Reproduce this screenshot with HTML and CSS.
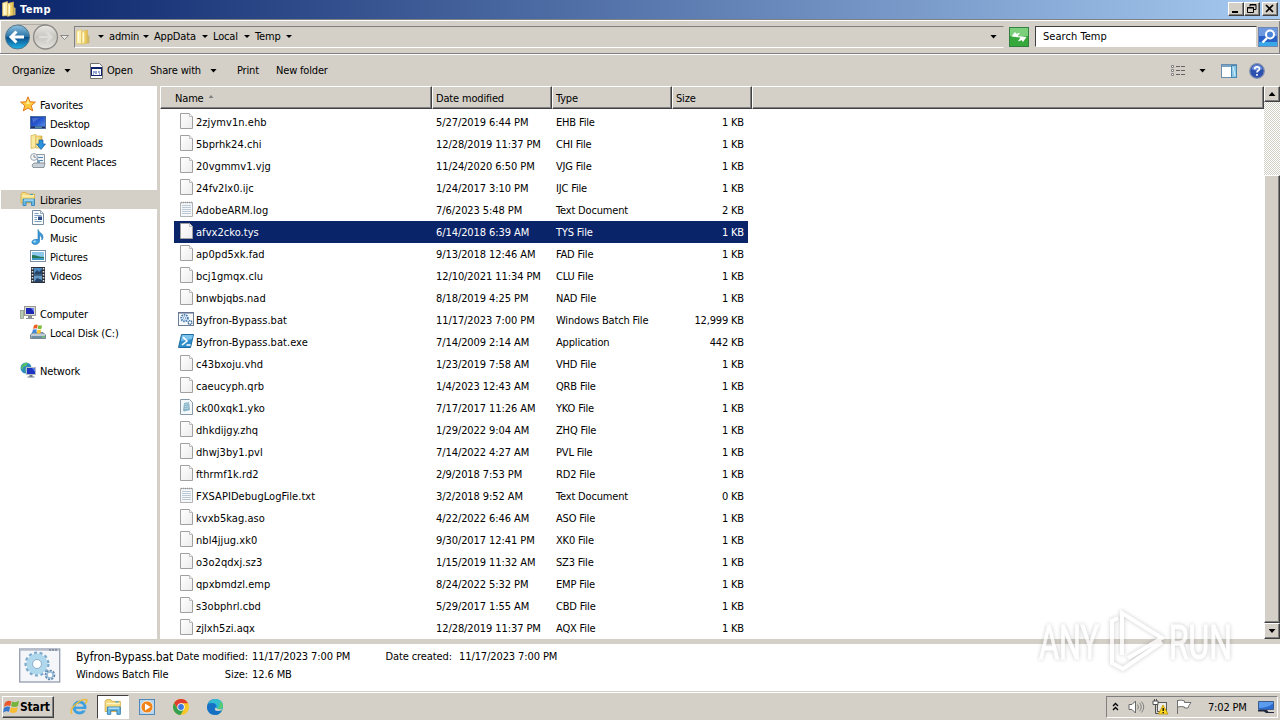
FILE: index.html
```html
<!DOCTYPE html>
<html lang="en">
<head>
  <meta charset="UTF-8" />
  <meta name="viewport" content="width=device-width, initial-scale=1.0" />
  <title>Temp</title>
  <link rel="stylesheet" href="styles.css">
</head>
<body>
  <!-- shared icons -->
  <svg width="0" height="0" class="defs">
    <defs>
      <linearGradient id="gFolder" x1="0" x2="1"><stop offset="0" stop-color="#fff3b0"/><stop offset="1" stop-color="#e0b840"/></linearGradient>
      <linearGradient id="gBlue" x1="0" x2="0" y1="0" y2="1"><stop offset="0" stop-color="#8fc3e0"/><stop offset=".48" stop-color="#2a74a8"/><stop offset=".5" stop-color="#0a4a86"/><stop offset="1" stop-color="#22b4e8"/></linearGradient>
      <linearGradient id="gGrey" x1="0" x2="0" y1="0" y2="1"><stop offset="0" stop-color="#eceae6"/><stop offset=".5" stop-color="#c8c5bf"/><stop offset="1" stop-color="#e6e4df"/></linearGradient>
      <linearGradient id="gPage" x1="0" x2="1" y1="0" y2="1"><stop offset="0" stop-color="#ffffff"/><stop offset="1" stop-color="#ececec"/></linearGradient>
      <linearGradient id="gScreen" x1="0" x2="1" y1="0" y2="1"><stop offset="0" stop-color="#1838a8"/><stop offset=".5" stop-color="#2858d0"/><stop offset="1" stop-color="#6a9cf0"/></linearGradient>
      <linearGradient id="gEdge" x1="0" x2="1" y1="0" y2="1"><stop offset="0" stop-color="#1468b8"/><stop offset=".5" stop-color="#1c98dc"/><stop offset="1" stop-color="#48c870"/></linearGradient>
    </defs>
    <symbol id="folder" viewBox="0 0 16 16">
      <path d="M1.500 2l5-1.500v14l-5 .5z" fill="#fdf0b0" stroke="#e0c060" stroke-width=".6"/>
      <path d="M6.500 2.500l6-1.500v13l-6 1.500z" fill="url(#gFolder)" stroke="#d8b450" stroke-width=".6"/>
      <path d="M12.500 6l2 1v7l-2 .5z" fill="#c9b56a"/>
      <path d="M3.500 3v10M8.500 4v9" stroke="#fffbe0" stroke-width="1"/>
    </symbol>
    <symbol id="star" viewBox="0 0 16 16">
      <path d="M8 .8l2 5 5.400.3-4.100 3.500 1.500 5.300L8 12l-4.700 2.900L4.700 9.600.6 6.100 6 5.800z" fill="#fcc83c" stroke="#dc6c14" stroke-width=".9"/>
      <path d="M8 3l1 3.700 3 .3-4 1-3-1 2-.5z" fill="#fff3a0"/>
    </symbol>
    <symbol id="desktop" viewBox="0 0 16 16">
      <rect x=".5" y="1.500" width="15" height="12" fill="url(#gScreen)" stroke="#4c6c9c"/>
      <path d="M2 3h7l-6 5z" fill="#7090e0" opacity=".5"/>
      <rect x="1" y="11.500" width="14" height="1.500" fill="#282c58"/><rect x="5" y="11.500" width="7" height="1.500" fill="#508ca0"/>
    </symbol>
    <symbol id="tray-desktop" viewBox="0 0 16 16">
      <path d="M.5 2.500h15v8H.5z" fill="#2c6cd0" stroke="#3c5c90"/>
      <path d="M1 3h14v1.500Q9 9 1 9z" fill="#5c9cec"/>
      <path d="M0 11h9l1.500 2H16v1H8l-2-1.500H0z" fill="#20283c"/>
    </symbol>
    <symbol id="downloads" viewBox="0 0 16 16">
      <path d="M1 1.500l5-1v13l-5 1z" fill="#fbe9a0" stroke="#d0ac48" stroke-width=".7"/>
      <path d="M6 2h6v12H6z" fill="url(#gFolder)" stroke="#d0ac48" stroke-width=".7"/>
      <path d="M9 6h4v4h2.500L11 15.500 6.500 10H9z" fill="#2c90dc" stroke="#1460a4" stroke-width=".7"/>
    </symbol>
    <symbol id="recent" viewBox="0 0 16 16">
      <path d="M5.500 1.500h9v9h-7v-5h-2z" fill="#eef2f6" stroke="#8c98a4"/>
      <path d="M8 4.500h5M9 7.500h4" stroke="#4c88b4"/><path d="M7 7h3v3H7z" fill="#7ca4c0"/>
      <path d="M2 12l2-2h11l-1 4.500H3z" fill="#c8d0d8" stroke="#78848e" stroke-width=".8"/>
      <circle cx="4" cy="4" r="3.400" fill="#f4f6f8" stroke="#909aa4" stroke-width=".9"/>
      <path d="M4 2v2.200h2" stroke="#607080" fill="none" stroke-width=".8"/>
    </symbol>
    <symbol id="libraries" viewBox="0 0 16 16">
      <path d="M1 3l1-1.500h4l1 1.500h7.500v9H1z" fill="#f6dc80" stroke="#d0ac48" stroke-width=".8"/>
      <path d="M2 5h12" stroke="#fff6c8"/><path d="M10 3.500h3" stroke="#40a0c8"/>
      <path d="M3 8h11.500v6.500h-3V11H6v3.500H3z" fill="#68b8e4" stroke="#2c7cb0" stroke-width=".8"/>
      <path d="M4 9h9.500" stroke="#c8ecfc"/>
    </symbol>
    <symbol id="documents" viewBox="0 0 16 16">
      <path d="M2.500.5h8l3 3v11h-11z" fill="#fafcfe" stroke="#788ca0"/>
      <path d="M10.500.5v3h3" fill="#dce6ee" stroke="#788ca0" stroke-width=".7"/>
      <path d="M4.500 3.500h4M4.500 5.500h7M4.500 7.500h2.500M4.500 9.500h2.500M4.500 11.500h7" stroke="#6c94bc" stroke-width=".9"/>
      <rect x="8" y="6.500" width="4" height="3.500" fill="#284c88"/>
    </symbol>
    <symbol id="music" viewBox="0 0 16 16">
      <path d="M8 .5c.5 3 5 3.500 5 7.500 0 1.500-.6 2.500-1.200 3 .4-3-.8-4-2.300-4.500V12c0 2-2 3.500-4.500 3.500S1.500 14 2 12.500 5 10 8 10.500z" fill="#3c9cdc" stroke="#1c70b0" stroke-width=".6"/>
      <ellipse cx="4.600" cy="12.500" rx="1.500" ry="1" fill="#a8dcf8"/>
    </symbol>
    <symbol id="pictures" viewBox="0 0 16 16">
      <rect x=".5" y="2.500" width="15" height="11" fill="#fff" stroke="#7890a8"/>
      <rect x="2" y="4" width="12" height="8" fill="#8cc8ec"/>
      <path d="M2 7c4 0 7 2 12 2v3H2z" fill="#247858"/><path d="M2 10l12 0v2H2z" fill="#3c98c0"/>
    </symbol>
    <symbol id="videos" viewBox="0 0 16 16">
      <rect x="1" y="0" width="14" height="16" fill="#2c3038"/>
      <rect x="4" y="1" width="8" height="6.500" fill="#4c8cc4"/><rect x="4" y="8.500" width="8" height="6.500" fill="#6098c8"/>
      <path d="M4 7l3-4 2 2 3-3v5zM4 15l3-4 5 2v2z" fill="#264468"/>
      <path d="M2.500 1v14M13.500 1v14" stroke="#e4e8ec" stroke-width="1.500" stroke-dasharray="1.500 1.500"/>
    </symbol>
    <symbol id="computer" viewBox="0 0 16 16">
      <rect x="4.500" y="1.500" width="11" height="9" fill="#dcdcd4" stroke="#989890"/>
      <rect x="6" y="3" width="8" height="6" fill="#1c28b4"/><path d="M11 3h3v4z" fill="#6c84f0"/>
      <path d="M8 11h4v2h2v1H6v-1h2z" fill="#8c9098"/>
      <rect x=".5" y="5.500" width="3" height="8" fill="#b8ccb0" stroke="#849080" stroke-width=".7"/>
    </symbol>
    <symbol id="disk" viewBox="0 0 16 16">
      <path d="M.5 11l2-2.500h10.500l2.500 2.500v3.500H.5z" fill="#98a8b4" stroke="#607484" stroke-width=".8"/>
      <path d="M1 11h14" stroke="#e8f0f4"/><path d="M2 13h10" stroke="#407890"/><rect x="12.500" y="12" width="2" height="1.500" fill="#50c850"/>
      <path d="M4 1.500Q6 0 7.700 1L7 4.500Q5 4 3 5z" fill="#ec5c24"/><path d="M8.300 1.200Q10 2 12 1.200L11.400 4.700Q9 5.500 7.600 4.700z" fill="#7cbc34"/>
      <path d="M2.800 5.700Q5 4.800 6.800 5.500L6.200 9Q4 8.400 2.200 9z" fill="#3c88dc"/><path d="M7.500 5.500Q9 6.500 11.200 5.500L10.600 9Q8 10 6.900 9z" fill="#fcc42c"/>
    </symbol>
    <symbol id="network" viewBox="0 0 16 16">
      <circle cx="6" cy="6" r="5.500" fill="#2c8cc0"/>
      <path d="M2 3q3-3 6-2l-2 3-3 1v3L1 6zM5 7l4-2 1 3-4 3z" fill="#58c068"/>
      <rect x="6.500" y="5.500" width="9" height="7" fill="#1c34c0" stroke="#b8bcc4"/>
      <path d="M12 6h3v4z" fill="#5c80ec"/><path d="M9.500 13h3v1.500h2v1h-7v-1h2z" fill="#6c7c88"/>
    </symbol>
    <symbol id="file" viewBox="0 0 16 16">
      <path d="M2.500.5h9l3 3v12h-12z" fill="url(#gPage)" stroke="#a0a0a0"/>
      <path d="M11.500.5v3h3" fill="#fafafa" stroke="#b0b0b0" stroke-width=".8"/>
    </symbol>
    <symbol id="text" viewBox="0 0 16 16">
      <path d="M2.500 1.500h12v14h-12z" fill="#f6f7f8" stroke="#b0b2b4"/>
      <path d="M3 1.500h11" stroke="#989898" stroke-width="1.500" stroke-dasharray="1 1"/>
      <path d="M4 4.500h9M4 6.500h9M4 8.500h9M4 10.500h9M4 12.500h9" stroke="#bccad8"/>
    </symbol>
    <symbol id="yko" viewBox="0 0 16 16">
      <path d="M2.500.5h9l3 3v12h-12z" fill="#f4f8fa" stroke="#8898a4"/>
      <path d="M6 4l5-1 1 8-6 1.500-1-1z" fill="#88b4c8"/><path d="M6.500 5.500l4-1M6.500 7.500l4-.5M6.500 9.500l4-.5" stroke="#b8d8e4"/>
    </symbol>
    <symbol id="bat" viewBox="0 0 16 16">
      <rect x=".5" y="1.500" width="15" height="13" fill="#f6f9fc" stroke="#6c7c94"/>
      <path d="M1 2h14" stroke="#5c6c88"/>
      <circle cx="6.500" cy="7" r="3.300" fill="none" stroke="#5084b8" stroke-width="2" stroke-dasharray="1.600 .8"/>
      <circle cx="6.500" cy="7" r="1.300" fill="#fff" stroke="#5c90c0" stroke-width=".7"/>
      <circle cx="12" cy="11.500" r="1.800" fill="#fff" stroke="#44709c" stroke-width="1.500" stroke-dasharray="1.200 .5"/>
    </symbol>
    <symbol id="powershell" viewBox="0 0 16 16">
      <path d="M3.500 1.500h12l-3 13H.5z" fill="#2f8fcc" stroke="#1c6ca4"/>
      <path d="M4 2h11l-1 4-11 2z" fill="#7cc4ec"/>
      <path d="M5 4l4 4-5 4M8.500 12h4" fill="none" stroke="#fff" stroke-width="1.600"/>
    </symbol>
    <symbol id="flag" viewBox="0 0 18 18">
      <path d="M2 4.500Q5 1 8.800 3L7.700 8Q4.500 6.500 1 9z" fill="#e8582c"/><path d="M9.600 3.200Q13 5 17 2.500L15.800 8Q12 10 8.500 8z" fill="#74b43c"/>
      <path d="M1 10Q4.500 7.600 7.500 9L6.400 14Q3.500 12.500 0 15z" fill="#3878cc"/><path d="M8.300 9.200Q12 11 15.500 9L14.500 14Q11 16.500 7.200 14.300z" fill="#f8bc30"/>
    </symbol>
  </svg>

  <div class="window">
    <div class="titlebar">
      <svg class="icon"><use href="#folder"/></svg>
      <span class="title">Temp</span>
      <div class="window-buttons">
        <span class="btn"><svg width="14" height="12"><path d="M3 9h6" stroke="#000" stroke-width="2"/></svg></span>
        <span class="btn"><svg width="14" height="12"><path d="M5 3.500V1.500h6v5H9M5 2h6M2.500 4.500h6v5h-6zM2 5h7" fill="none" stroke="#000"/></svg></span>
        <span class="btn close"><svg width="14" height="12"><path d="M3 2l7 7M10 2l-7 7" stroke="#000" stroke-width="1.700"/></svg></span>
      </div>
    </div>

    <div class="navbar">
      <svg class="arrows" width="70" height="28" viewBox="0 0 70 28">
        <path d="M16 1.500h30" stroke="#b0ada7"/>
        <circle cx="16.500" cy="14" r="12" fill="url(#gBlue)" stroke="#54788c"/>
        <path d="M10 14h13M15.500 8.500L10 14l5.500 5.500" fill="none" stroke="#fff" stroke-width="3"/>
        <circle cx="44.500" cy="14" r="12" fill="url(#gGrey)" stroke="#8c8a86" stroke-width="1.300"/>
        <path d="M38 14h12M45.500 9l5 5-5 5" fill="none" stroke="#dedcd8" stroke-width="2.600"/>
        <path d="M59.500 12.500h8l-4 4z" fill="#eceae6" stroke="#8c8a86"/>
      </svg>
      <div class="address">
        <svg class="icon"><use href="#folder"/></svg>
        <i class="down first"></i>
        <span class="crumb w-admin">admin</span><i class="down"></i>
        <span class="crumb w-appdata">AppData</span><i class="down"></i>
        <span class="crumb w-local">Local</span><i class="down"></i>
        <span class="crumb w-temp">Temp</span><i class="down"></i>
        <i class="down big last"></i>
      </div>
      <svg class="refresh" width="20" height="20" viewBox="0 0 20 20">
        <rect x=".5" y=".5" width="19" height="19" fill="#36a83c" stroke="#348040"/><path d="M1 1h18v8H1z" fill="#7cd07c"/>
        <path d="M2.500 9.500L6 5l1.500 2q1.500-1.500 3.500-1-1.500 1.500-2 2.500l1.500 2z" fill="#fff"/><path d="M17.500 10L14 15l-1.500-2q-1.500 1.500-3.500 1 1.500-1.500 2-3L10 9z" fill="#fff"/>
      </svg>
      <div class="search">Search Temp</div>
      <svg class="search-btn" width="20" height="20" viewBox="0 0 20 20">
        <rect x=".5" y=".5" width="19" height="19" fill="#2860c8" stroke="#7088b0"/><path d="M1 1h18v8H1z" fill="#6c98e0"/><path d="M1 15h18v4H1z" fill="#38a8e8"/>
        <circle cx="12" cy="7.500" r="4" fill="#4884d8" stroke="#fff" stroke-width="2"/><path d="M9 11l-4.500 4.500" stroke="#fff" stroke-width="2.400"/>
      </svg>
    </div>

    <div class="toolbar">
      <span class="w-organize">Organize</span><i class="down big"></i>
      <svg class="open-icon" width="15" height="16" viewBox="0 0 15 16"><path d="M1.500.5h9l3 3v12h-12z" fill="#fff" stroke="#707070"/><rect x="2.500" y="4.500" width="10" height="8" fill="#fff" stroke="#10246c"/><path d="M2 5h11" stroke="#10246c" stroke-width="2"/><path d="M4 9h2M7 8v3M9 9h2M4 11h1M10 11h1" stroke="#2850b0"/></svg>
      <span class="w-open">Open</span>
      <span class="w-share">Share with</span><i class="down big"></i>
      <span class="w-print">Print</span>
      <span class="w-new">New folder</span>
      <div class="toolbar-right">
        <svg width="17" height="14" viewBox="0 0 17 14"><path d="M1.500 1.500h2v2h-2zM1.500 5.500h2v2h-2zM1.500 9.500h2v2h-2z" fill="#fff" stroke="#848484"/><path d="M6 2.500h4M11 2.500h4M6 6.500h4M11 6.500h4M6 10.500h4M11 10.500h4" stroke="#646464"/></svg>
        <i class="down big"></i>
        <svg class="pane" width="17" height="14" viewBox="0 0 17 14"><rect x=".5" y=".5" width="15" height="13" fill="#fff" stroke="#6c8cac"/><path d="M1 2h14" stroke="#78a4c8" stroke-width="2"/><rect x="10.500" y="1.500" width="5" height="12" fill="#8cc8e8" stroke="#4888b0"/><path d="M12 3l2 9" stroke="#d4f0fc"/></svg>
        <svg width="16" height="16" viewBox="0 0 16 16"><circle cx="8" cy="8" r="7.300" fill="#2c50b0" stroke="#8090b0" stroke-width="1.300"/><path d="M2.500 6a5.800 5.800 0 0 1 11 0q-5 3-11 0z" fill="#6c90dc"/><path d="M5.700 6.200q0-2.400 2.400-2.400t2.300 2q0 1.200-1.300 2Q8 8.500 8 9.500M8 11v1.800" fill="none" stroke="#fff" stroke-width="1.700"/></svg>
      </div>
    </div>

    <div class="main">
      <div class="sidebar">
        <div class="group">
          <div class="node"><svg class="icon"><use href="#star"/></svg>Favorites</div>
          <div class="node child"><svg class="icon"><use href="#desktop"/></svg>Desktop</div>
          <div class="node child"><svg class="icon"><use href="#downloads"/></svg>Downloads</div>
          <div class="node child"><svg class="icon"><use href="#recent"/></svg>Recent Places</div>
        </div>
        <div class="group">
          <div class="node active"><svg class="icon"><use href="#libraries"/></svg>Libraries</div>
          <div class="node child"><svg class="icon"><use href="#documents"/></svg>Documents</div>
          <div class="node child"><svg class="icon"><use href="#music"/></svg>Music</div>
          <div class="node child"><svg class="icon"><use href="#pictures"/></svg>Pictures</div>
          <div class="node child"><svg class="icon"><use href="#videos"/></svg>Videos</div>
        </div>
        <div class="group">
          <div class="node"><svg class="icon"><use href="#computer"/></svg>Computer</div>
          <div class="node child"><svg class="icon"><use href="#disk"/></svg>Local Disk (C:)</div>
        </div>
        <div class="group">
          <div class="node"><svg class="icon"><use href="#network"/></svg>Network</div>
        </div>
      </div>

      <div class="files">
        <div class="columns">
          <div class="col name">Name <i class="up"></i></div>
          <div class="col">Date modified</div>
          <div class="col">Type</div>
          <div class="col">Size</div>
          <div class="col"></div>
        </div>
        <div class="rows" id="rows"></div>
      </div>

      <div class="scrollbar">
        <span class="sb-btn"><i class="tri-up"></i></span>
        <span class="thumb"></span>
        <span class="sb-btn"><i class="tri-down"></i></span>
      </div>
    </div>

    <div class="details">
      <svg class="big-icon" width="42" height="36" viewBox="0 0 42 36">
        <rect x=".7" y="2" width="40" height="33" fill="#f4f6fa" stroke="#9ca4b4" stroke-width="1.400"/>
        <path d="M1 3h39" stroke="#b4bcc8" stroke-width="1.600"/><path d="M30 3h9" stroke="#5c6478" stroke-dasharray="2 1"/>
        <circle cx="18" cy="17" r="11" fill="none" stroke="#7ca8cc" stroke-width="3" stroke-dasharray="3 2.400"/>
        <circle cx="18" cy="17" r="7.500" fill="#fff" stroke="#b0d8ec" stroke-width="6"/>
        <circle cx="18" cy="17" r="4.500" fill="#fff" stroke="#7098bc" stroke-width=".8"/>
        <circle cx="31" cy="28" r="4" fill="#fff" stroke="#6088ac" stroke-width="2.600" stroke-dasharray="2 1"/>
        <circle cx="31" cy="28" r="3" fill="#fff" stroke="#98bcd8" stroke-width="1.600"/>
      </svg>
      <div class="detail-name">
        <div class="file-name">Byfron-Bypass.bat</div>
        <div>Windows Batch File</div>
      </div>
      <div class="props">
        <span class="label">Date modified:</span><span>11/17/2023 7:00 PM</span>
        <span class="label">Size:</span><span>12.6 MB</span>
      </div>
      <div class="props created">
        <span class="label">Date created:</span><span>11/17/2023 7:00 PM</span>
      </div>
    </div>
  </div>

  <div class="taskbar">
    <div class="start"><svg width="17" height="18"><use href="#flag"/></svg><span>Start</span></div>
    <div class="task"><svg width="18" height="18" viewBox="0 0 18 18"><circle cx="9.500" cy="9.500" r="5.500" fill="none" stroke="#3ca0e0" stroke-width="3"/><path d="M5 9.800h10" stroke="#3ca0e0" stroke-width="2.200"/><path d="M13 11h4v1.500h-4z" fill="#d4d0c8"/><path d="M2 16Q-1 12 6 6T17 2q0 2-2 4" fill="none" stroke="#ecbc3c" stroke-width="1.500"/></svg></div>
    <div class="task active"><svg width="18" height="18"><use href="#libraries"/></svg></div>
    <div class="task"><svg width="16" height="16" viewBox="0 0 16 16"><rect x=".5" y=".5" width="15" height="15" fill="#b8d4ec" stroke="#5088b8"/><circle cx="8" cy="8" r="6" fill="#f08418" stroke="#fff" stroke-width=".7"/><path d="M6 4.500l5.500 3.500L6 11.500z" fill="#fff"/></svg></div>
    <div class="task"><svg width="16" height="16" viewBox="0 0 16 16"><circle cx="8" cy="8" r="8" fill="#f8c828"/><path d="M1.100 4A8 8 0 0 1 15 4.300H8L4.800 9.800z" fill="#e03c30"/><path d="M1.100 4A8 8 0 0 0 7.500 16l3.500-6H4.600z" fill="#34a050"/><circle cx="8" cy="8" r="3.700" fill="#fff"/><circle cx="8" cy="8" r="2.900" fill="#3c78e0"/></svg></div>
    <div class="task"><svg width="16" height="16" viewBox="0 0 16 16"><circle cx="8" cy="8" r="8" fill="url(#gEdge)"/><path d="M0 8q1-4 5-4 4 0 4 3.500Q7 9 8 11q3 2 7 0-2 5-7 5-8-1-8-8z" fill="#1670c4"/><path d="M1 4.500Q4 0 8 0q8 0 8 7-1 4-6 2.500Q11 4 5 4q-3 0-4 .5z" fill="#34bcd0"/><path d="M13 2q3 2 3 5-1 4-6 2.500 3-1 3-7.500z" fill="#58cc70"/><path d="M9 8.500q1 2.500 5.500 1.500L15 11q-5 2-7 0-.5-1.500 1-2.500z" fill="#d4d0c8"/></svg></div>
    <div class="tray">
      <svg class="t-chev" width="7" height="10" viewBox="0 0 7 10"><path d="M1 4l2.500-2.500L6 4M1 8l2.500-2.500L6 8" fill="none" stroke="#000" stroke-width="1.400"/></svg>
      <svg class="t-vol" width="17" height="14" viewBox="0 0 17 14"><path d="M1 4.500h3l3.500-3.500v12L4 9.500H1z" fill="#fff" stroke="#686868"/><path d="M9.500 4.500q2 2.500 0 5M11.500 2.800q3.500 4.200 0 8.400M13.500 1.500q4.500 5.500 0 11" fill="none" stroke="#808080"/></svg>
      <svg class="t-net" width="17" height="16" viewBox="0 0 17 16"><rect x="5.500" y="3.500" width="9" height="9" fill="#ecebe6" stroke="#5c5c5c"/><path d="M1 2h5v3.500H1z" fill="#fff" stroke="#505050"/><path d="M2.500 0v2M4.500 0v2M3.500 5.500v9h5" fill="none" stroke="#505050"/><path d="M11 6l5 9H6.500z" fill="#ffd820" stroke="#b89000" stroke-width=".8"/><path d="M11.200 9v3M11.200 13v1.200" stroke="#000" stroke-width="1.300"/></svg>
      <svg class="t-flag" width="17" height="16" viewBox="0 0 17 16"><path d="M1.500 1v14M1.500 1.500q4-1 7 .5v1.500h6.500l-2 3-1 2.500H8.500V8q-3-1-7 0z" fill="#fff" stroke="#707070"/></svg>
      <span class="clock">7:02 PM</span>
      <svg class="t-desk" width="16" height="16"><use href="#tray-desktop"/></svg>
    </div>
  </div>

  <svg class="watermark" width="220" height="80" viewBox="0 0 220 80">
    <g class="mark">
      <text x="9" y="58" textLength="60" lengthAdjust="spacingAndGlyphs">ANY</text>
      <text x="139" y="58" textLength="63" lengthAdjust="spacingAndGlyphs">RUN</text>
      <path d="M92 54V12l40 25-34 20M88 17l-6 3v42l11 6 39-27" fill="none" stroke-width="4"/>
    </g>
  </svg>

  <script>
    const files = [
      ["file", "2zjymv1n.ehb", "5/27/2019 6:44 PM", "EHB File", "1 KB"],
      ["file", "5bprhk24.chi", "12/28/2019 11:37 PM", "CHI File", "1 KB"],
      ["file", "20vgmmv1.vjg", "11/24/2020 6:50 PM", "VJG File", "1 KB"],
      ["file", "24fv2lx0.ijc", "1/24/2017 3:10 PM", "IJC File", "1 KB"],
      ["text", "AdobeARM.log", "7/6/2023 5:48 PM", "Text Document", "2 KB"],
      ["file", "afvx2cko.tys", "6/14/2018 6:39 AM", "TYS File", "1 KB"],
      ["file", "ap0pd5xk.fad", "9/13/2018 12:46 AM", "FAD File", "1 KB"],
      ["file", "bcj1gmqx.clu", "12/10/2021 11:34 PM", "CLU File", "1 KB"],
      ["file", "bnwbjqbs.nad", "8/18/2019 4:25 PM", "NAD File", "1 KB"],
      ["bat", "Byfron-Bypass.bat", "11/17/2023 7:00 PM", "Windows Batch File", "12,999 KB"],
      ["powershell", "Byfron-Bypass.bat.exe", "7/14/2009 2:14 AM", "Application", "442 KB"],
      ["file", "c43bxoju.vhd", "1/23/2019 7:58 AM", "VHD File", "1 KB"],
      ["file", "caeucyph.qrb", "1/4/2023 12:43 AM", "QRB File", "1 KB"],
      ["yko", "ck00xqk1.yko", "7/17/2017 11:26 AM", "YKO File", "1 KB"],
      ["file", "dhkdijgy.zhq", "1/29/2022 9:04 AM", "ZHQ File", "1 KB"],
      ["file", "dhwj3by1.pvl", "7/14/2022 4:27 AM", "PVL File", "1 KB"],
      ["file", "fthrmf1k.rd2", "2/9/2018 7:53 PM", "RD2 File", "1 KB"],
      ["text", "FXSAPIDebugLogFile.txt", "3/2/2018 9:52 AM", "Text Document", "0 KB"],
      ["file", "kvxb5kag.aso", "4/22/2022 6:46 AM", "ASO File", "1 KB"],
      ["file", "nbl4jjug.xk0", "9/30/2017 12:41 PM", "XK0 File", "1 KB"],
      ["file", "o3o2qdxj.sz3", "1/15/2019 11:32 AM", "SZ3 File", "1 KB"],
      ["file", "qpxbmdzl.emp", "8/24/2022 5:32 PM", "EMP File", "1 KB"],
      ["file", "s3obphrl.cbd", "5/29/2017 1:55 AM", "CBD File", "1 KB"],
      ["file", "zjlxh5zi.aqx", "12/28/2019 11:37 PM", "AQX File", "1 KB"]
    ];
    const selected = "afvx2cko.tys";

    document.getElementById("rows").innerHTML = files.map(([icon, name, date, type, size]) => `
      <div class="row ${name === selected ? "selected" : ""}">
        <span class="cell-name"><svg class="icon"><use href="#${icon}"/></svg>${name}</span>
        <span class="cell-date">${date}</span>
        <span class="cell-type">${type}</span>
        <span class="cell-size">${size}</span>
      </div>`).join("");
  </script>
</body>
</html>
```

FILE: styles.css
```css
* {
  box-sizing: border-box;
}
body {
  margin: 0;
  width: 1280px;
  height: 720px;
  overflow: hidden;
  display: flex;
  flex-direction: column;
  background: #d4d0c8;
  color: #000;
  font-family: "DejaVu Sans Condensed", "DejaVu Sans", Tahoma, sans-serif;
  font-size: 11px;
  letter-spacing: -0.17px;
  white-space: nowrap;
}
svg {
  display: block;
  flex: none;
}
.defs {
  position: absolute;
}
.icon {
  width: 16px;
  height: 16px;
}
.window {
  height: 692px;
  display: flex;
  flex-direction: column;
}

/* title bar */
.titlebar {
  height: 19px;
  display: flex;
  align-items: center;
  padding: 0 2px 1px 1px;
  background: linear-gradient(to right, #0a246a, #a6caf0);
  color: #fff;
}
.title {
  font-weight: bold;
  margin-left: 3px;
  letter-spacing: 0.4px;
}
.window-buttons {
  display: flex;
  margin-left: auto;
}
.btn {
  width: 16px;
  height: 14px;
  background: #d4d0c8;
  border: 1px solid;
  border-color: #fff #404040 #404040 #fff;
  box-shadow: inset -1px -1px #808080;
}
.close {
  margin-left: 2px;
}

/* address bar */
.navbar {
  height: 36px;
  display: flex;
  align-items: center;
  padding: 0 0 1px 1px;
  border-top: 1px solid #808080;
  border-bottom: 1px solid #fff;
  box-shadow: inset 0 1px #fff, inset 0 -1px #808080, inset 1px 0 #fff, inset -1px 0 #808080;
}
.address {
  width: 930px;
  height: 22px;
  margin-left: 3px;
  display: flex;
  align-items: center;
  border: 1px solid;
  border-color: #808080 #d4d0c8 #fff #808080;
}
.down {
  flex: none;
  width: 6px;
  height: 3px;
  background: #000;
  clip-path: polygon(0 0, 100% 0, 50% 100%);
}
.down.first {
  margin: 0 5px 0 7px;
}
.down.big {
  width: 7px;
  height: 4px;
}
.crumb + .down {
  margin-right: 5px;
}
.down.last {
  margin: 0 6px 0 auto;
}
.w-admin { width: 34px; }
.w-appdata { width: 48px; }
.w-local { width: 31px; }
.w-temp { width: 31px; }
.refresh {
  margin-left: 5px;
}
.search {
  width: 222px;
  height: 21px;
  margin: 0 1px 0 6px;
  padding: 3px 7px 0;
  line-height: 14px;
  letter-spacing: 0.05px;
  background: #fff;
  border: 1px solid;
  border-color: #404040 #d4d0c8 #fff #404040;
}

/* toolbar */
.toolbar {
  height: 31px;
  display: flex;
  align-items: center;
  padding-left: 12px;
}
.w-organize { width: 52px; }
.open-icon { margin: 0 3px 0 18px; }
.w-open { width: 43px; }
.w-share { width: 60px; }
.w-print { width: 39px; margin-left: 20px; }
.toolbar-right {
  display: flex;
  align-items: center;
  margin: 0 15px 0 auto;
}
.toolbar-right .down {
  margin: 0 15px 0 12px;
}
.pane {
  margin-right: 11px;
}

/* body */
.main {
  height: 553px;
  display: flex;
  background: #fff;
}
.sidebar {
  width: 160px;
  padding-top: 9px;
  border-right: 3px solid #d4d0c8;
}
.group {
  margin-bottom: 19px;
}
.node {
  height: 19px;
  display: flex;
  align-items: center;
  gap: 4px;
  margin-left: 1px;
  padding: 1px 0 0 19px;
}
.node .icon {
  margin-top: -2px;
}
.child {
  padding-left: 29px;
}
.active {
  background: #d4d0c8;
}
.files {
  width: 1104px;
}
.columns {
  height: 23px;
  display: grid;
  grid-template-columns: 272px 120px 120px 80px 1fr;
}
.col {
  padding: 1px 0 0 3px;
  display: flex;
  align-items: center;
  background: #d4d0c8;
  border: 1px solid;
  border-color: #fff #404040 #404040 #fff;
  box-shadow: inset -1px -1px #808080;
}
.col.name {
  padding-left: 14px;
}
.up {
  width: 5px;
  height: 3px;
  margin: 0 0 3px 5px;
  background: #808080;
  clip-path: polygon(50% 0, 100% 100%, 0 100%);
}
.rows {
  padding: 2px 0 0 14px;
}
.row {
  width: 574px;
  height: 22px;
  display: grid;
  grid-template-columns: 262px 120px 120px 68px;
  align-items: center;
}
.row.selected {
  background: #0a246a;
  color: #fff;
}
.cell-name {
  display: flex;
  align-items: center;
  gap: 2px;
  padding-left: 4px;
  letter-spacing: 0.05px;
}
.cell-name .icon {
  margin-top: -2px;
}
.cell-date {
  letter-spacing: -0.08px;
}
.cell-size {
  text-align: right;
}

/* scrollbar */
.scrollbar {
  width: 16px;
  display: flex;
  flex-direction: column;
  background: repeating-conic-gradient(#fff 0 25%, #d4d0c8 0 50%) 0 0 / 2px 2px;
}
.sb-btn,
.thumb {
  background: #d4d0c8;
  border: 1px solid;
  border-color: #fff #404040 #404040 #fff;
  box-shadow: inset -1px -1px #808080;
}
.sb-btn {
  height: 16px;
  display: flex;
  align-items: center;
  justify-content: center;
}
.thumb {
  height: 448px;
  margin-top: auto;
}
.tri-up,
.tri-down {
  width: 7px;
  height: 4px;
  background: #000;
  clip-path: polygon(50% 0, 100% 100%, 0 100%);
}
.tri-down {
  clip-path: polygon(0 0, 100% 0, 50% 100%);
}

/* details pane */
.details {
  height: 53px;
  display: flex;
  padding: 4px 0 0 19px;
  line-height: 18px;
  background: #fff;
  border-top: 5px solid #d4d0c8;
  border-bottom: 1px solid #d4d0c8;
}
.big-icon {
  margin: -1px 15px 0 0;
}
.detail-name {
  width: 98px;
}
.file-name {
  font-size: 12px;
  letter-spacing: -0.07px;
}
.props {
  width: 210px;
  display: grid;
  grid-template-columns: 74px 1fr;
  grid-auto-rows: 18px;
  column-gap: 4px;
  letter-spacing: -0.1px;
}
.label {
  text-align: right;
}
.created {
  grid-template-columns: 71px 1fr;
}
.created .label {
  padding-right: 3px;
}

/* taskbar */
.taskbar {
  height: 28px;
  display: flex;
  align-items: center;
  padding: 1px 0 0 2px;
  border-top: 1px solid #fff;
}
.start {
  width: 52px;
  height: 22px;
  display: flex;
  align-items: center;
  margin-right: 9px;
  font-weight: bold;
  font-size: 12px;
  border: 1px solid;
  border-color: #fff #404040 #404040 #fff;
  box-shadow: inset -1px -1px #808080;
}
.task {
  width: 32px;
  height: 24px;
  margin-right: 2px;
  display: flex;
  align-items: center;
  justify-content: center;
}
.task.active {
  background: #fff;
  border: 1px solid;
  border-color: #404040 #fff #fff #404040;
}
.tray {
  width: 172px;
  height: 22px;
  margin: 0 2px 0 auto;
  padding-left: 5px;
  display: flex;
  align-items: center;
  border: 1px solid;
  border-color: #808080 #fff #fff #808080;
}
.t-vol { margin-left: 9px; }
.t-net { margin-left: 7px; }
.t-flag { margin-left: 7px; }
.clock {
  width: 39px;
  margin: 0 11px 0 15px;
}

/* watermark */
.watermark {
  position: absolute;
  left: 1030px;
  top: 601px;
}
.mark {
  fill: #fff;
  stroke: #fff;
  opacity: 0.75;
  font-family: Roboto, sans-serif;
  font-size: 49px;
  letter-spacing: 0;
  filter: drop-shadow(0 0 2px rgba(0, 0, 0, 0.28));
}
```
